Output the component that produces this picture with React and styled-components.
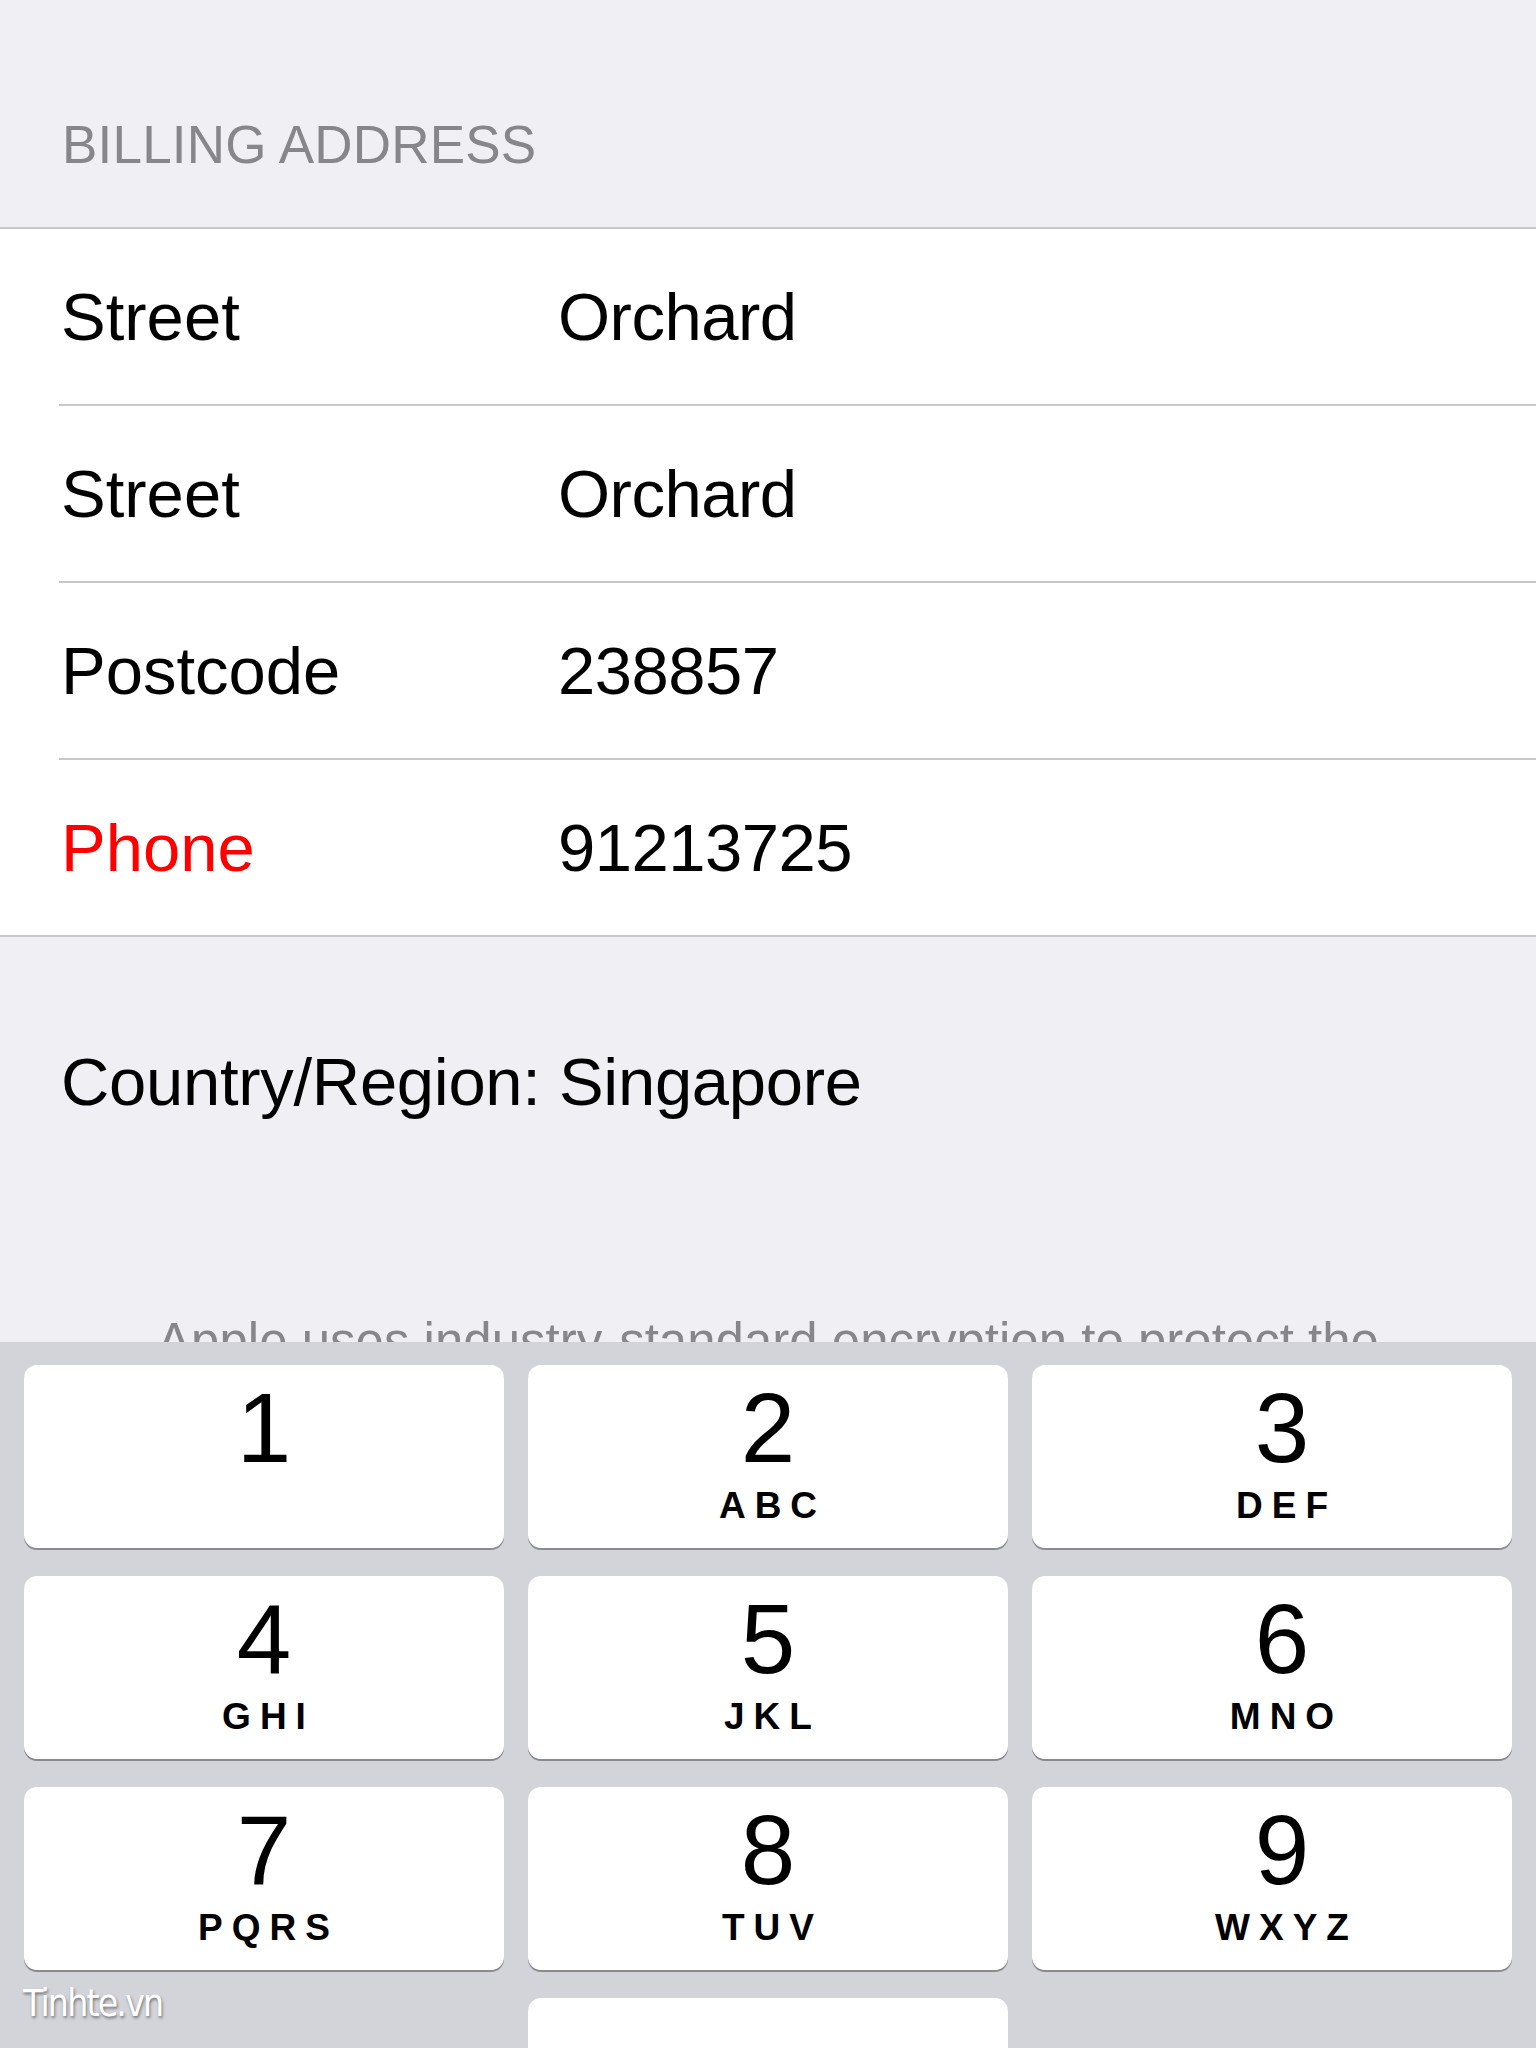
import React from "react";
import styled, { createGlobalStyle } from "styled-components";

const Global = createGlobalStyle`
  html, body { margin: 0; padding: 0; }
  body {
    width: 1536px;
    height: 2048px;
    overflow: hidden;
    background: #efeff4;
    font-family: "Liberation Sans", Arial, sans-serif;
    -webkit-font-smoothing: antialiased;
  }
`;

const Screen = styled.div`
  position: relative;
  width: 1536px;
  height: 2048px;
  display: flex;
  flex-direction: column;
  background: #efeff4;
  overflow: hidden;
`;

const Content = styled.div`
  flex: 1;
  min-height: 0;
  overflow: hidden;
  display: flex;
  flex-direction: column;
  & > * { flex-shrink: 0; }
`;

const SectionHeader = styled.div`
  box-sizing: border-box;
  height: 227px;
  padding: 113px 0 0 62px;
  font-size: 53px;
  line-height: 64px;
  color: #86868b;
  letter-spacing: 0.2px;
`;

const List = styled.div`
  background: #ffffff;
  border-top: 2px solid #c8c7cc;
  border-bottom: 2px solid #c8c7cc;
  display: flex;
  flex-direction: column;
`;

const Row = styled.div`
  position: relative;
  flex-shrink: 0;
  box-sizing: border-box;
  height: ${(p) => (p.$last ? 175 : 177)}px;
  display: grid;
  grid-template-columns: 497px 1fr;
  align-items: center;
  padding: ${(p) => (p.$last ? "0" : "0 0 2px")} 61px;
  font-size: 67px;
  line-height: 80px;
  color: #000;
  &::after {
    content: "";
    display: ${(p) => (p.$last ? "none" : "block")};
    position: absolute;
    left: 59px;
    right: 0;
    bottom: 0;
    height: 2px;
    background: #c8c7cc;
  }
`;

const Label = styled.span`
  color: ${(p) => (p.$error ? "#fe0000" : "#000")};
`;

const Value = styled.span`
  color: #000;
  letter-spacing: -0.5px;
`;

const Country = styled.div`
  margin-top: 105px;
  padding-left: 61px;
  font-size: 67px;
  line-height: 80px;
  letter-spacing: -0.3px;
  color: #000;
`;

const Footer = styled.div`
  margin: 188px auto 0;
  width: 1260px;
  text-align: center;
  font-size: 51px;
  line-height: 64px;
  color: #86868b;
`;

const Keyboard = styled.div`
  box-sizing: border-box;
  height: 706px;
  flex-shrink: 0;
  background: #d2d4da;
  padding: 23px 24px 0;
  display: grid;
  grid-template-columns: repeat(3, 480px);
  grid-auto-rows: 183px;
  column-gap: 24px;
  row-gap: 28px;
  overflow: hidden;
`;

const Key = styled.div`
  grid-column: ${(p) => p.$col || "auto"};
  background: #ffffff;
  border-radius: 13px;
  box-shadow: 0 2px 0 #898a8e;
  display: flex;
  flex-direction: column;
  align-items: center;
  padding-top: 14px;
  padding-left: ${(p) => (p.$shift ? 20 : 0)}px;
  box-sizing: border-box;
`;

const Digit = styled.div`
  font-size: 98px;
  line-height: 98px;
  color: #000;
`;

const Letters = styled.div`
  margin-top: 11px;
  height: 36px;
  font-size: 37px;
  line-height: 36px;
  font-weight: 700;
  letter-spacing: 9px;
  padding-left: 9px;
  color: #000;
`;

const Watermark = styled.div`
  position: absolute;
  left: 23px;
  top: 1982px;
  font-family: "Liberation Sans Narrow", "DejaVu Sans Condensed", Roboto, sans-serif;
  font-stretch: condensed;
  font-size: 37px;
  line-height: 44px;
  letter-spacing: -1.8px;
  color: #ffffff;
  text-shadow: 1px 2px 3px rgba(0, 0, 0, 0.45);
`;

const rows = [
  { label: "Street", value: "Orchard" },
  { label: "Street", value: "Orchard" },
  { label: "Postcode", value: "238857" },
  { label: "Phone", value: "91213725", error: true },
];

const keys = [
  ["1", ""],
  ["2", "ABC"],
  ["3", "DEF"],
  ["4", "GHI"],
  ["5", "JKL"],
  ["6", "MNO"],
  ["7", "PQRS"],
  ["8", "TUV"],
  ["9", "WXYZ"],
];

export default function App() {
  return (
    <>
      <Global />
      <Screen>
        <Content>
          <SectionHeader>BILLING ADDRESS</SectionHeader>
          <List>
            {rows.map((r, i) => (
              <Row key={i} $last={i === rows.length - 1}>
                <Label $error={r.error}>{r.label}</Label>
                <Value>{r.value}</Value>
              </Row>
            ))}
          </List>
          <Country>Country/Region: Singapore</Country>
          <Footer>
            Apple uses industry-standard encryption to protect the
            confidentiality of your personal information.
          </Footer>
        </Content>
        <Keyboard>
          {keys.map(([d, l], i) => (
            <Key key={d} $shift={i % 3 === 2}>
              <Digit>{d}</Digit>
              <Letters>{l}</Letters>
            </Key>
          ))}
          <Key $col="2" />
        </Keyboard>
        <Watermark>Tinhte.vn</Watermark>
      </Screen>
    </>
  );
}
